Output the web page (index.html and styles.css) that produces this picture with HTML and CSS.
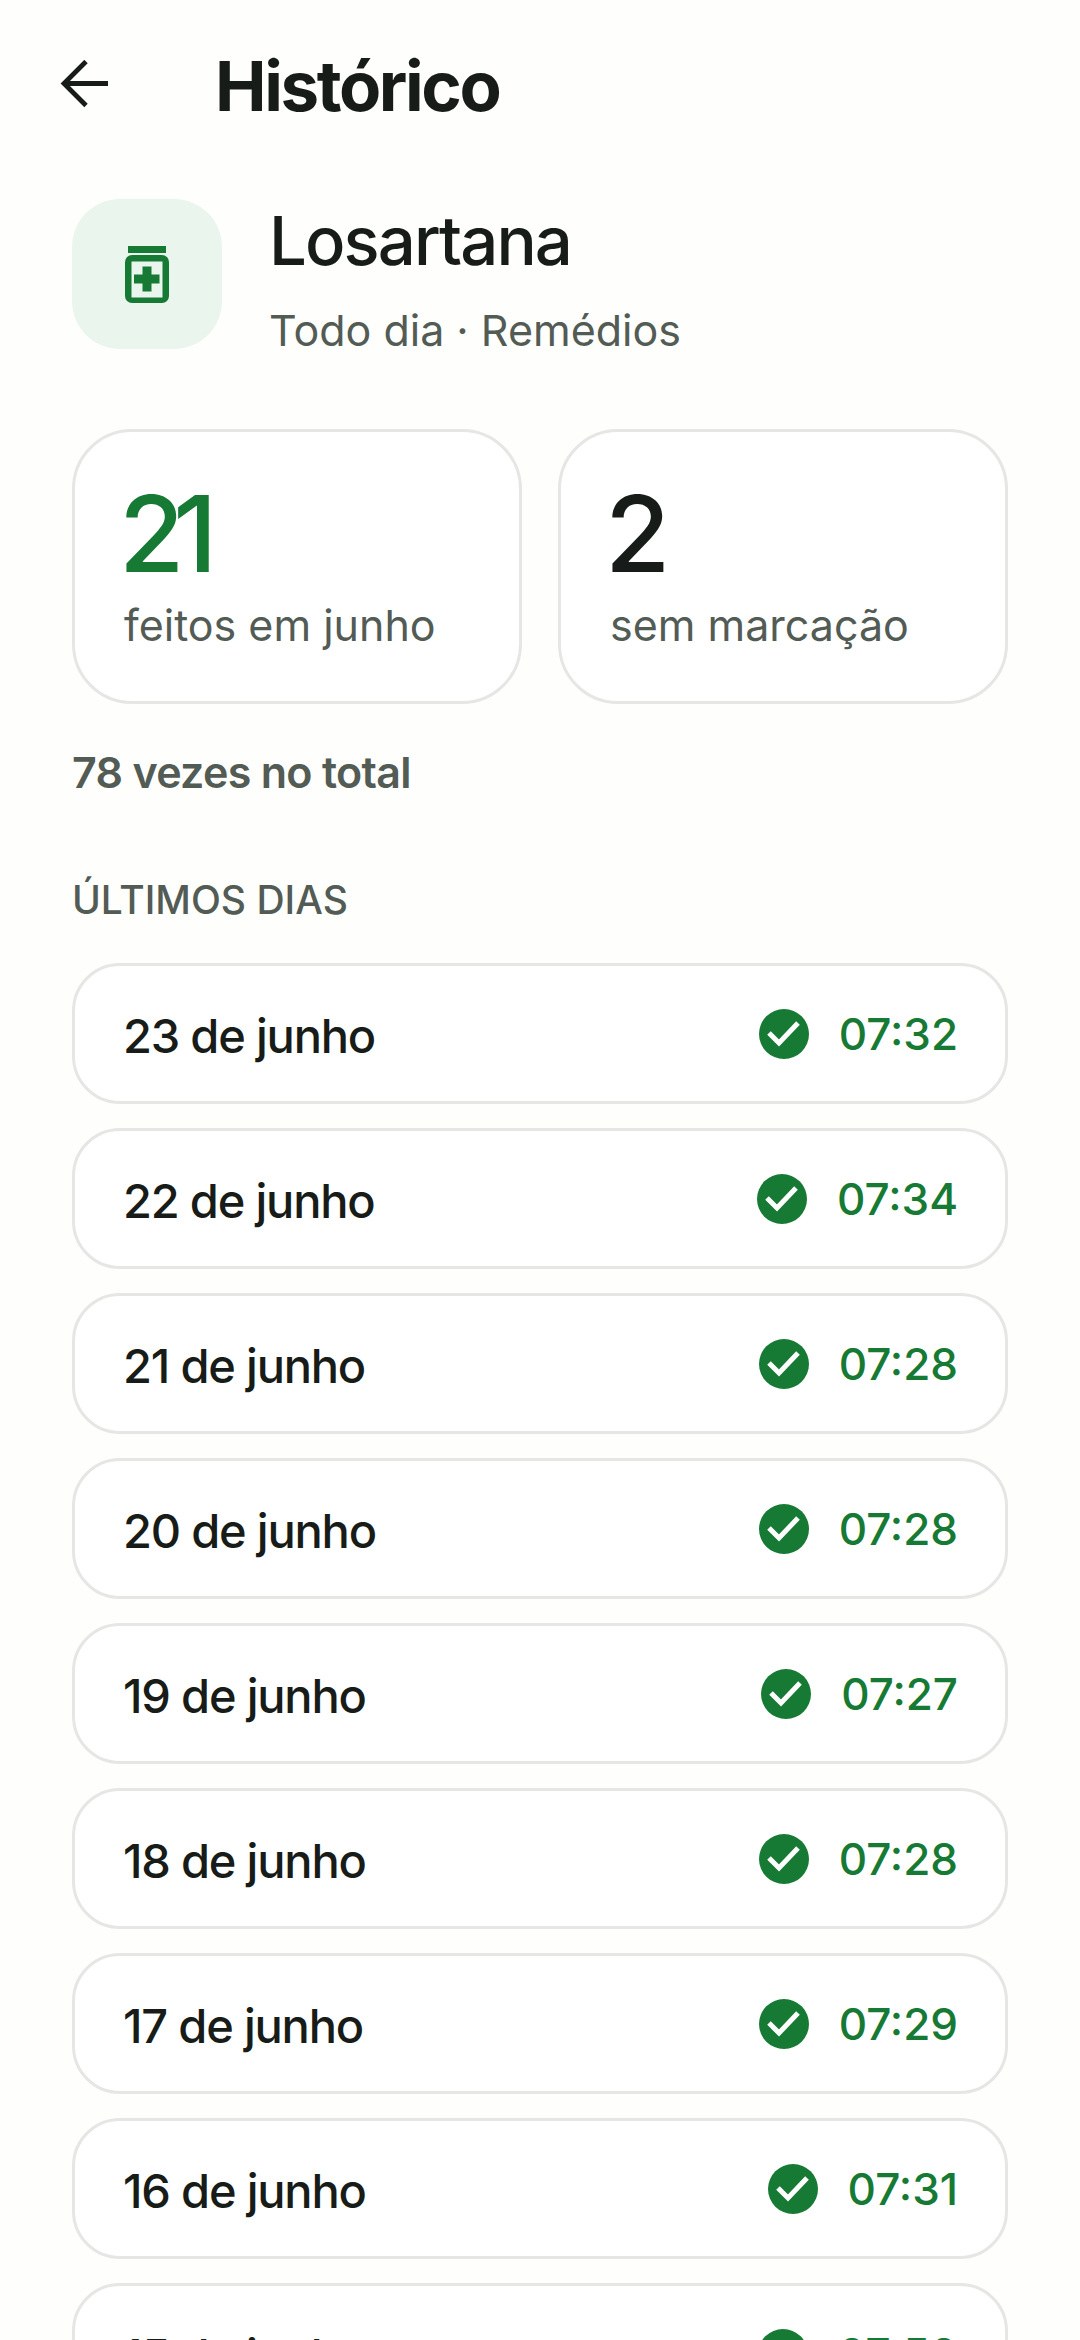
FILE: index.html
```html
<!DOCTYPE html>
<html lang="pt-BR">
<head>
  <meta charset="UTF-8" />
  <meta name="viewport" content="width=device-width, initial-scale=1.0"/>
  <title>Histórico</title>
  <link rel="stylesheet" href="styles.css">
</head>
<body>
  <header class="topbar">
    <svg class="back-icon" viewBox="0 0 48 48" width="48" height="48"><path d="M48 23.5H4M26 1.5 4 23.5l22 22" fill="none" stroke="#181c18" stroke-width="4.8"/></svg>
    <h1>Histórico</h1>
  </header>

  <section class="habit">
    <div class="habit-icon">
      <svg viewBox="0 0 44 57" width="44" height="57"><path fill="#177a34" fill-rule="evenodd" d="M3 0h38v7H3zM7 9h30a7 7 0 0 1 7 7v34a7 7 0 0 1-7 7H7a7 7 0 0 1-7-7V16a7 7 0 0 1 7-7ZM6.500 15.500v36h31v-36ZM17.500 20.500h9v8h8v9h-8v8h-9v-8H9v-9h8.500Z"/></svg>
    </div>
    <div class="habit-text">
      <h2>Losartana</h2>
      <p class="habit-sub">Todo dia · Remédios</p>
    </div>
  </section>

  <section class="stats">
    <div class="stat-card">
      <div class="stat-num green">21</div>
      <div class="stat-label">feitos em junho</div>
    </div>
    <div class="stat-card">
      <div class="stat-num">2</div>
      <div class="stat-label">sem marcação</div>
    </div>
  </section>

  <p class="total">78 vezes no total</p>
  <h3 class="section-title">ÚLTIMOS DIAS</h3>

  <ul class="days">
    <li class="day"><span class="day-name">23 de junho</span><span class="day-time"><svg class="check" viewBox="0 0 50 50"><circle cx="25" cy="25" r="25" fill="#177a34"/><path d="m10 24 10 10 19-20" fill="none" stroke="#fff" stroke-width="5"/></svg>07:32</span></li>
    <li class="day"><span class="day-name">22 de junho</span><span class="day-time"><svg class="check" viewBox="0 0 50 50"><circle cx="25" cy="25" r="25" fill="#177a34"/><path d="m10 24 10 10 19-20" fill="none" stroke="#fff" stroke-width="5"/></svg>07:34</span></li>
    <li class="day"><span class="day-name">21 de junho</span><span class="day-time"><svg class="check" viewBox="0 0 50 50"><circle cx="25" cy="25" r="25" fill="#177a34"/><path d="m10 24 10 10 19-20" fill="none" stroke="#fff" stroke-width="5"/></svg>07:28</span></li>
    <li class="day"><span class="day-name">20 de junho</span><span class="day-time"><svg class="check" viewBox="0 0 50 50"><circle cx="25" cy="25" r="25" fill="#177a34"/><path d="m10 24 10 10 19-20" fill="none" stroke="#fff" stroke-width="5"/></svg>07:28</span></li>
    <li class="day"><span class="day-name">19 de junho</span><span class="day-time"><svg class="check" viewBox="0 0 50 50"><circle cx="25" cy="25" r="25" fill="#177a34"/><path d="m10 24 10 10 19-20" fill="none" stroke="#fff" stroke-width="5"/></svg>07:27</span></li>
    <li class="day"><span class="day-name">18 de junho</span><span class="day-time"><svg class="check" viewBox="0 0 50 50"><circle cx="25" cy="25" r="25" fill="#177a34"/><path d="m10 24 10 10 19-20" fill="none" stroke="#fff" stroke-width="5"/></svg>07:28</span></li>
    <li class="day"><span class="day-name">17 de junho</span><span class="day-time"><svg class="check" viewBox="0 0 50 50"><circle cx="25" cy="25" r="25" fill="#177a34"/><path d="m10 24 10 10 19-20" fill="none" stroke="#fff" stroke-width="5"/></svg>07:29</span></li>
    <li class="day"><span class="day-name">16 de junho</span><span class="day-time"><svg class="check" viewBox="0 0 50 50"><circle cx="25" cy="25" r="25" fill="#177a34"/><path d="m10 24 10 10 19-20" fill="none" stroke="#fff" stroke-width="5"/></svg>07:31</span></li>
    <li class="day"><span class="day-name">15 de junho</span><span class="day-time"><svg class="check" viewBox="0 0 50 50"><circle cx="25" cy="25" r="25" fill="#177a34"/><path d="m10 24 10 10 19-20" fill="none" stroke="#fff" stroke-width="5"/></svg>07:50</span></li>
  </ul>
</body>
</html>
```

FILE: styles.css
```css
html, body {
  height: 2340px;
  overflow: hidden;
}

body {
  margin: 0;
  padding: 0 72px;
  background-color: #fefefc;
  color: #181c18;
  font-family: Inter, "Liberation Sans", sans-serif;
}

h1, h2, h3, p, ul {
  margin: 0;
  padding: 0;
}

.topbar {
  display: flex;
  align-items: center;
  height: 172px;
  margin-left: -12px;
}

.back-icon {
  flex: none;
  margin-top: -5px;
}

.topbar h1 {
  margin-left: 107px;
  font-size: 69px;
  font-weight: 700;
  letter-spacing: -2.4px;
  line-height: 72px;
}

.habit {
  display: flex;
  align-items: flex-start;
  gap: 47px;
  height: 150px;
  margin-top: 27px;
}

.habit-icon {
  display: flex;
  align-items: center;
  justify-content: center;
  width: 150px;
  height: 150px;
  border-radius: 48px;
  background-color: #eaf5ee;
}

.habit-text {
  padding-top: 6px;
}

.habit h2 {
  font-size: 67px;
  font-weight: 500;
  letter-spacing: -1.9px;
  line-height: 72px;
}

.habit-sub {
  margin-top: 28px;
  font-size: 43px;
  line-height: 50px;
  color: #535b55;
}

.stats {
  display: grid;
  grid-template-columns: 1fr 1fr;
  gap: 36px;
  margin-top: 80px;
}

.stat-card {
  height: 275px;
  box-sizing: border-box;
  padding: 48px 49px 0;
  border: 3px solid #e6e7e4;
  border-radius: 60px;
  background-color: #fff;
}

.stat-num {
  margin-left: -5px;
  font-size: 106px;
  font-weight: 500;
  letter-spacing: -11px;
  line-height: 108px;
}

.green {
  color: #177a34;
}

.stat-label {
  margin-top: 12px;
  font-size: 43px;
  line-height: 50px;
  color: #535b55;
}

.total {
  margin-top: 42px;
  font-size: 43px;
  font-weight: 600;
  letter-spacing: -0.7px;
  line-height: 52px;
  color: #535b55;
}

.section-title {
  margin-top: 77px;
  font-size: 39px;
  font-weight: 500;
  line-height: 50px;
  color: #535b55;
}

.days {
  display: flex;
  flex-direction: column;
  gap: 24px;
  margin-top: 38px;
  list-style: none;
}

.day {
  display: flex;
  flex: none;
  align-items: center;
  justify-content: space-between;
  height: 141px;
  box-sizing: border-box;
  padding: 0 47px 0 48px;
  border: 3px solid #e6e7e4;
  border-radius: 48px;
  background-color: #fff;
}

.day-name {
  padding-top: 3px;
  font-size: 47px;
  font-weight: 500;
  letter-spacing: -1.2px;
}

.day-time {
  display: flex;
  align-items: center;
  gap: 30px;
  font-size: 44px;
  font-weight: 500;
  color: #177a34;
}

.check {
  width: 50px;
  height: 50px;
}
```
